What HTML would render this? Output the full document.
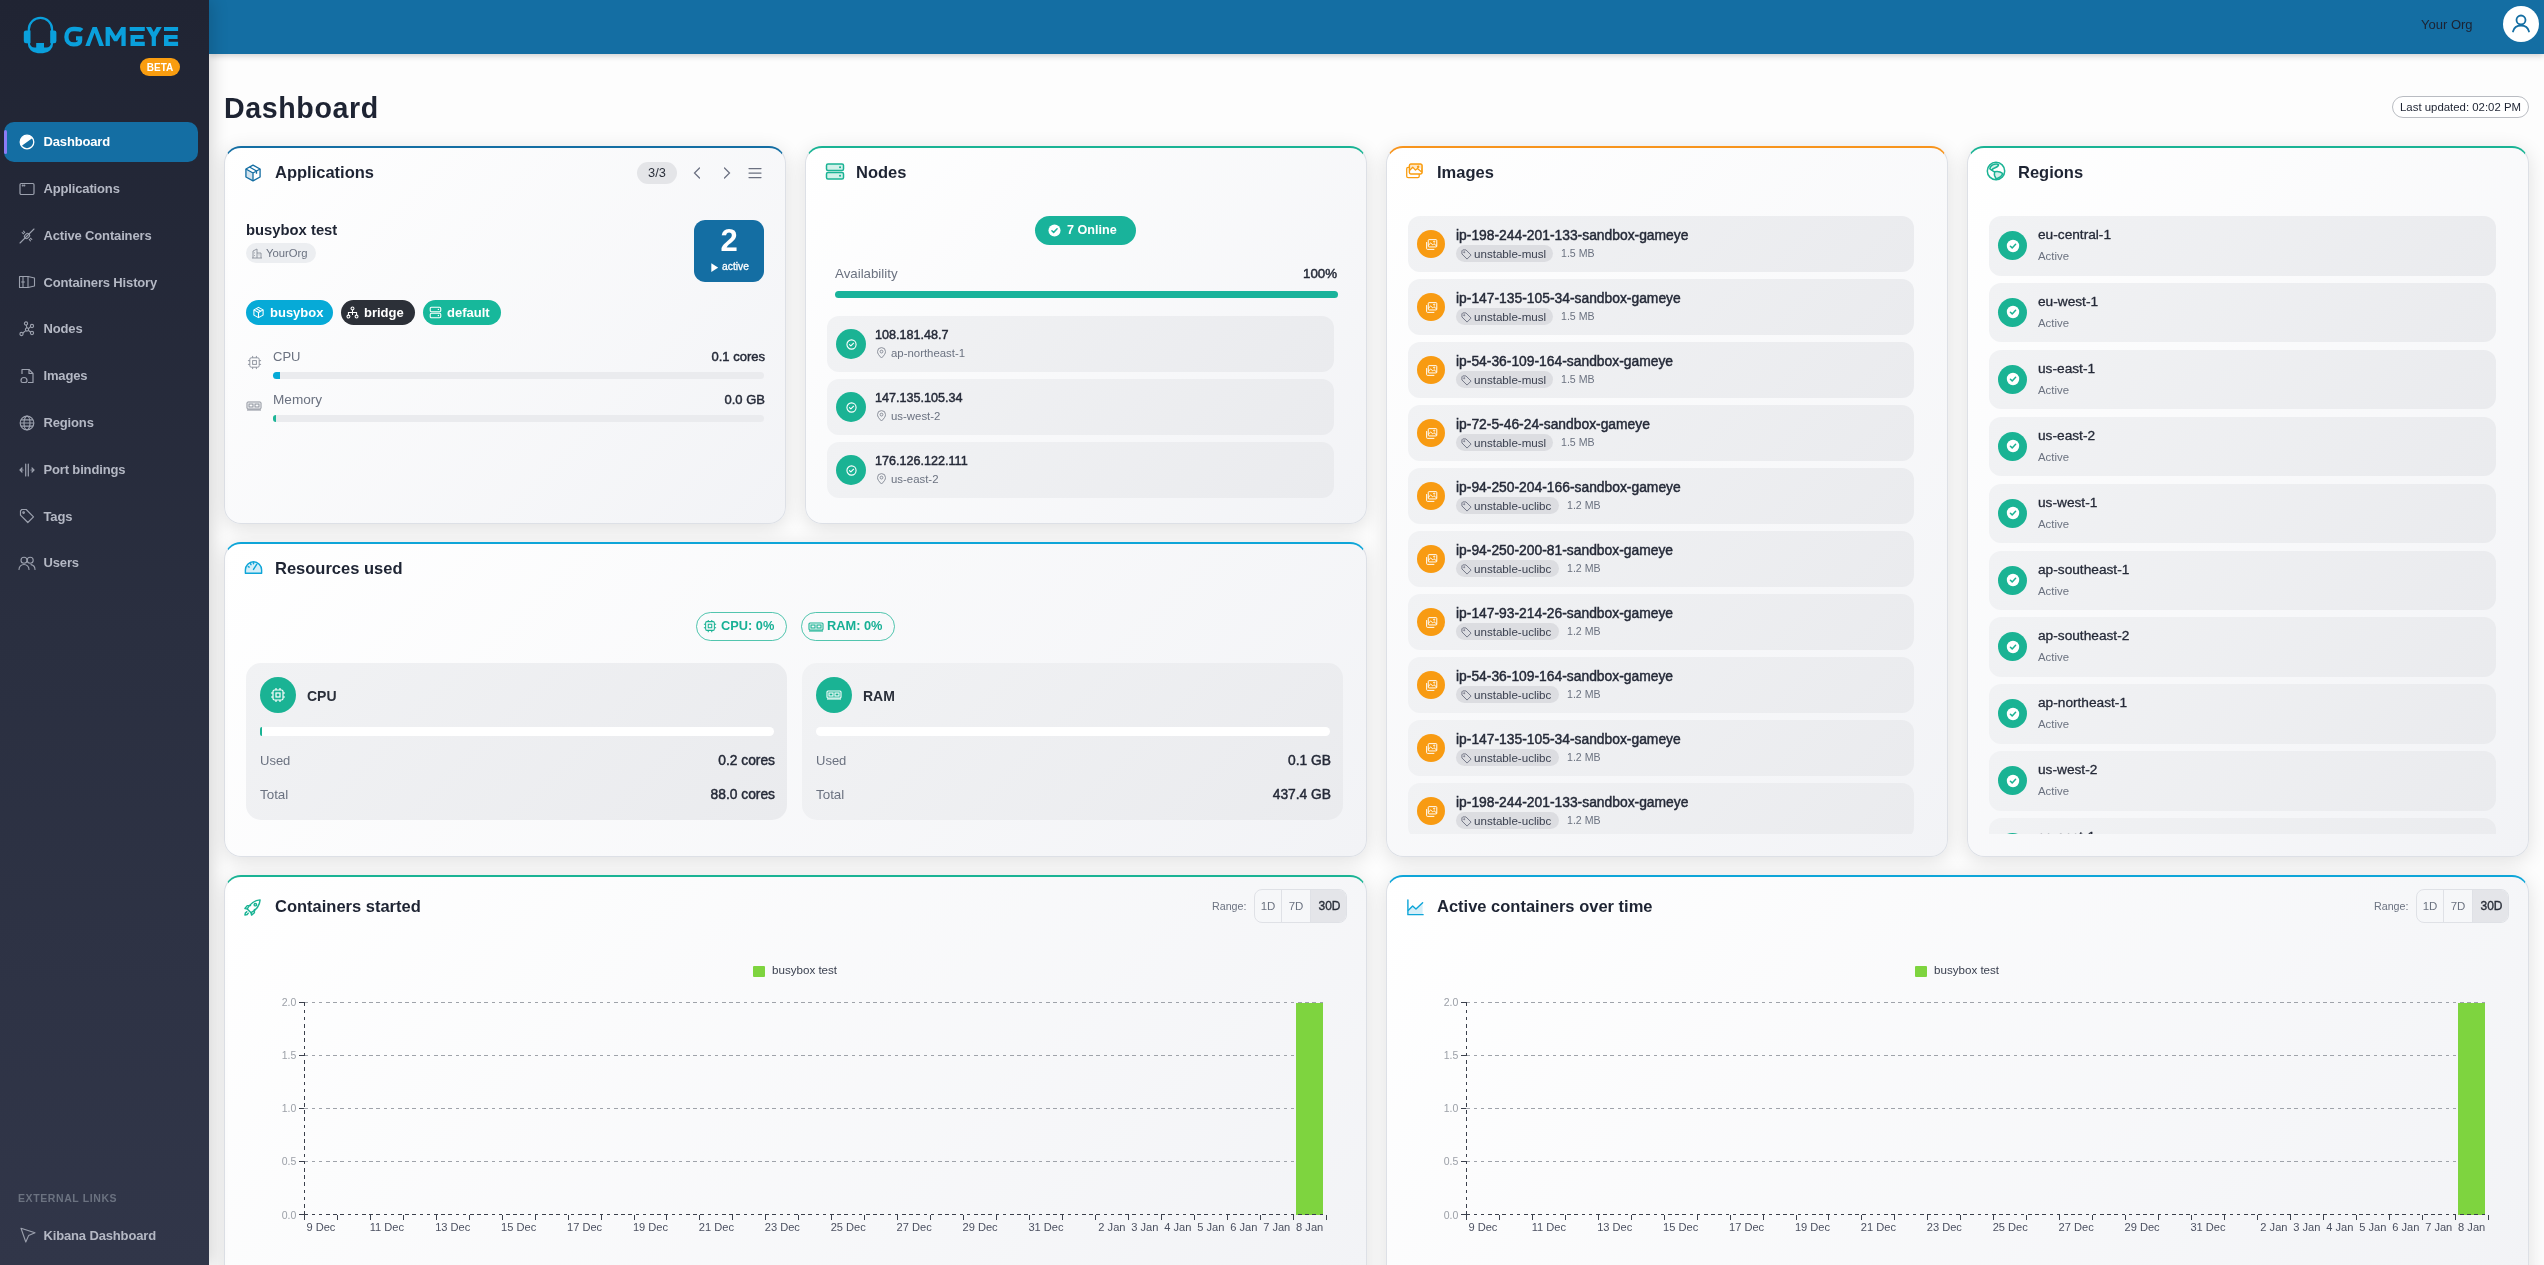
<!DOCTYPE html>
<html><head><meta charset="utf-8">
<style>
*{box-sizing:border-box;margin:0;padding:0}
html,body{width:2544px;height:1265px;overflow:hidden}
.sidebar,.header,.card,body>.abs{will-change:transform}
body{font-family:"Liberation Sans",sans-serif;color:#1e2433;background:#f4f4f4;position:relative}
.abs{position:absolute}
svg{display:block}
/* sidebar */
.sidebar{position:absolute;left:0;top:0;width:209px;height:1265px;background:linear-gradient(180deg,#202433 0%,#2a2f40 50%,#313649 100%);z-index:5;box-shadow:3px 0 16px rgba(0,0,0,0.16)}
.nav{position:absolute;left:4px;width:194px;height:40px;border-radius:10px;color:#b4b8c4;font-size:13px;font-weight:700;letter-spacing:-0.15px}
.nav .ic{position:absolute;left:15px;top:12px;width:16px;height:16px}
.nav span{position:absolute;left:39.5px;top:12.2px;line-height:16px;white-space:nowrap}
.nav.active{background:#146ea3;color:#fff}
.nav.active:before{content:"";position:absolute;left:0;top:8px;width:3px;height:24px;background:#8b7cf6;border-radius:2px}
/* header */
.header{position:absolute;left:209px;top:0;width:2335px;height:54px;background:#146ea3;z-index:4;box-shadow:0 2px 6px rgba(0,0,0,0.18)}
.main{position:absolute;left:209px;top:53px;width:2335px;height:1212px;background:#fdfdfd}
/* cards */
.card{position:absolute;border:1px solid #dde0e6;border-top:2px solid #146ea3;border-radius:17px;background:linear-gradient(135deg,#ffffff 0%,#f2f3f6 100%);box-shadow:0 4px 20px rgba(0,0,0,0.12);overflow:hidden}
.ctitle{position:absolute;font-size:16.5px;font-weight:700;color:#1e2433;line-height:20px;white-space:nowrap}
.cicon{position:absolute;width:20px;height:20px}
.row{position:absolute;border-radius:12px;background:linear-gradient(135deg,#f1f2f4 0%,#eaebee 100%)}
.circ{position:absolute;border-radius:50%}
.t14{font-size:13.5px;font-weight:400;color:#252a38;-webkit-text-stroke:0.45px #252a38;white-space:nowrap}
.t11{font-size:11px;color:#6b7280;white-space:nowrap}
</style></head>
<body>
<div class="sidebar">
  <!-- logo -->
  <svg class="abs" style="left:0;top:0" width="200" height="60" viewBox="0 0 200 60">
    <g fill="#0aa0dc">
      <path fill-rule="evenodd" d="M27.7,29.5 A12.75,12.75 0 0 1 53.2,29.5 V43 A10.2,10.2 0 0 1 43,53.2 H37.9 A10.2,10.2 0 0 1 27.7,43 Z M29.9,29.5 A10.55,10.55 0 0 1 51,29.5 V43 A4.5,4.5 0 0 1 46.5,47.5 H44 V42.9 H36.2 V47.5 H34.4 A4.5,4.5 0 0 1 29.9,43 Z"/>
      <path d="M26,30.5 H30.5 V43.3 H26 A2.2,2.2 0 0 1 23.8,41.1 V32.7 A2.2,2.2 0 0 1 26,30.5z"/>
      <path d="M50.2,30.5 H54.2 A2.2,2.2 0 0 1 56.4,32.7 V41.1 A2.2,2.2 0 0 1 54.2,43.3 H50.2z"/>
      <path d="M85.3,46.1 L92.6,27 H96.8 L104,46.1 H99.3 L94.6,32.8 L89.7,46.1z"/>
      <path d="M105.6,46.1 V27 H110 L115.65,36 L121.3,27 H125.7 V46.1 H121.4 V34.5 L117.2,41.3 H114.1 L109.9,34.5 V46.1z"/>
      <path d="M129.7,27 H144.8 V30.9 H129.7z M130.5,35.1 H143.6 V39 H135 V41.8 H144.8 V46.1 H130.5z"/>
      <path d="M145.9,27 H151 L153.8,32 L156.6,27 H161.8 L155.9,37 V46.1 H151.7 V37z"/>
      <path d="M164,27 H178.1 V30.9 H164z M164,35.1 H177.6 V39 H168.5 V41.8 H178.1 V46.1 H164z"/>
    </g>
    <path d="M81.8,30.4 C80.2,28.8 77.8,29 73.6,29 C68.8,29 66.4,32.6 66.4,36.9 C66.4,41.4 69.2,44.4 73.6,44.4 C78.2,44.4 80.1,42.6 80.1,40.2 V38.4 H76" fill="none" stroke="#0aa0dc" stroke-width="4.3"/>
  </svg>
  <div class="abs" style="left:140px;top:58px;width:40px;height:18.4px;border-radius:9.2px;background:#f99d10;color:#fff;font-size:10px;font-weight:700;text-align:center;line-height:18.4px;padding-top:1.2px">BETA</div>

  <div class="nav active" style="top:122px">
    <svg class="ic" viewBox="0 0 16 16" style="left:14.5px;top:12px;width:16px;height:16px"><path d="M2.43 11.9 A6.8 6.8 0 0 1 13.57 4.1 Z" fill="#fff"/><circle cx="8" cy="8" r="6.8" fill="none" stroke="#fff" stroke-width="1.3"/></svg>
    <span>Dashboard</span></div>
  <div class="nav" style="top:168.8px">
    <svg class="ic" viewBox="0 0 16 16" fill="none" stroke="#9ca1ae" stroke-width="1.2"><rect x="1" y="2.5" width="14" height="11" rx="1.2"/><circle cx="3.7" cy="4.6" r="0.4" fill="#9ca1ae"/><circle cx="5.4" cy="4.6" r="0.4" fill="#9ca1ae"/></svg>
    <span>Applications</span></div>
  <div class="nav" style="top:215.6px">
    <svg class="ic" viewBox="0 0 16 16" fill="none" stroke="#9ca1ae" stroke-width="1.1" stroke-linecap="round"><path d="M1 15 L15 1"/><rect x="5.3" y="6" width="5.4" height="4" rx="1.6" transform="rotate(-45 8 8)"/><path d="M3.2 4.6 l1.4 1.1 M11.4 10.3 l1.4 1.1 M4.6 3.2 l1.1 1.4 M10.3 11.4 l1.1 1.4"/></svg>
    <span>Active Containers</span></div>
  <div class="nav" style="top:262.4px">
    <svg class="ic" viewBox="0 0 18 16" fill="none" stroke="#9ca1ae" stroke-width="1.1" stroke-linejoin="round" style="width:18px;left:13.5px"><path d="M1.5 2.5 H10 L16.5 4 V12 L10 13.5 H1.5z"/><path d="M10 2.5 V13.5 M5 2.5 V13.5 M3.2 8 H6.8"/></svg>
    <span>Containers History</span></div>
  <div class="nav" style="top:309.2px">
    <svg class="ic" viewBox="0 0 16 16" fill="none" stroke="#9ca1ae" stroke-width="1.1"><circle cx="7" cy="2.5" r="1.6"/><circle cx="13" cy="5" r="1.6"/><circle cx="13" cy="12" r="1.6"/><circle cx="2.5" cy="13" r="1.6"/><circle cx="8" cy="8.5" r="1.6"/><path d="M7.4 4 L7.8 7 M9.4 7.8 L11.6 5.7 M9.3 9.3 L11.7 11.2 M6.8 9.6 L3.8 12"/></svg>
    <span>Nodes</span></div>
  <div class="nav" style="top:356px">
    <svg class="ic" viewBox="0 0 16 16" fill="none" stroke="#9ca1ae" stroke-width="1.2" stroke-linejoin="round"><path d="M3 6 V1.5 h7 l4 4 V14.5 h-5"/><path d="M10 1.5 v4 h4"/><path d="M2 12.5 c0-2 1.5-3 3-3 c1.5 0 3 1.2 3 3 c0 1.5-1 2-2 2 h-2.5 c-1 0-1.5-.7-1.5-2z"/></svg>
    <span>Images</span></div>
  <div class="nav" style="top:402.8px">
    <svg class="ic" viewBox="0 0 16 16" fill="none" stroke="#9ca1ae" stroke-width="1.2"><circle cx="8" cy="8" r="6.8"/><ellipse cx="8" cy="8" rx="3" ry="6.8"/><path d="M1.2 8 h13.6 M2 4.8 h12 M2 11.2 h12"/></svg>
    <span>Regions</span></div>
  <div class="nav" style="top:449.6px">
    <svg class="ic" viewBox="0 0 16 16" fill="none" stroke="#9ca1ae" stroke-width="1.2" stroke-linecap="round"><path d="M6.7 2 v12 M9.3 2 v12 M1 8 h3 M12 8 h3 M3 6 L1 8 L3 10 M13 6 L15 8 L13 10"/></svg>
    <span>Port bindings</span></div>
  <div class="nav" style="top:496.4px">
    <svg class="ic" viewBox="0 0 16 16" fill="none" stroke="#9ca1ae" stroke-width="1.2" stroke-linejoin="round"><path d="M1.5 2.8 V7.2 L8.8 14.5 L14.5 8.8 L7.2 1.5 H2.8z"/><circle cx="4.6" cy="4.6" r="0.8"/></svg>
    <span>Tags</span></div>
  <div class="nav" style="top:543.2px">
    <svg class="ic" viewBox="0 0 18 16" fill="none" stroke="#9ca1ae" stroke-width="1.1" stroke-linecap="round" style="width:18px;left:13.5px"><circle cx="6" cy="5.2" r="3"/><path d="M1 14.5 c0-3 2.2-5 5-5 s5 2 5 5"/><circle cx="12.2" cy="5.2" r="3"/><path d="M13 9.6 c2.4 .5 4 2.4 4 4.9"/></svg>
    <span>Users</span></div>

  <div class="abs" style="left:18px;top:1192px;font-size:10.5px;font-weight:700;color:#6b7280;letter-spacing:0.6px;line-height:12px">EXTERNAL LINKS</div>
  <div class="nav" style="top:1215.5px">
    <svg class="ic" viewBox="0 0 16 16" fill="none" stroke="#9ca1ae" stroke-width="1.1" stroke-linejoin="round" style="left:15.5px;top:11px;width:16px;height:16px"><path d="M1 1.2 L15 5.8 L8.6 8.6 L5.8 15z"/></svg>
    <span>Kibana Dashboard</span></div>
</div>

<div class="header">
  <div class="abs" style="left:2212px;top:17px;font-size:13px;color:#1e2433;line-height:16px;opacity:0.999;will-change:opacity">Your Org</div>
  <div class="abs" style="left:2294px;top:6px;width:36px;height:36px;border-radius:50%;background:#fff">
    <svg class="abs" style="left:8px;top:7px" width="20" height="20" viewBox="0 0 20 20" fill="none" stroke="#146ea3" stroke-width="1.8" stroke-linecap="round"><circle cx="10" cy="7" r="4.5"/><path d="M2 18.5 c1-4 4.5-6 8-6 s7 2 8 6"/></svg>
  </div>
</div>

<div class="main">
</div>

<!-- page title -->
<div class="abs" style="left:224px;top:91px;font-size:28.6px;font-weight:700;color:#1e2433;line-height:34px;letter-spacing:0.6px">Dashboard</div>
<div class="abs" style="left:2392px;top:96px;width:137px;height:22px;border:1px solid #b9bcc2;border-radius:11px;font-size:11.4px;color:#1e2433;text-align:center;line-height:20px;background:#fff">Last updated: 02:02 PM</div>


<!-- Applications card -->
<div class="card" style="left:224px;top:146px;width:562px;height:378px;border-top-color:#146ea3">
  <svg class="cicon" style="left:18px;top:15px" viewBox="0 0 24 24" fill="none" stroke="#146ea3" stroke-width="1.6" stroke-linejoin="round">
    <path d="M3.5 7.2 L12 12 V21.5 L3.5 16.8z" fill="#d3e3ee" stroke="none"/>
    <path d="M12 2.5 L20.5 7.2 V16.8 L12 21.5 L3.5 16.8 V7.2z"/><path d="M3.5 7.2 L12 12 L20.5 7.2 M12 12 V21.5 M7.8 4.8 L16.2 9.6 V13"/>
  </svg>
  <div class="ctitle" style="left:50px;top:14px">Applications</div>
  <div class="abs" style="left:412px;top:14px;width:40px;height:22px;border-radius:11px;background:#e4e5e8;font-size:12.8px;color:#2a2f3a;text-align:center;line-height:22px">3/3</div>
  <svg class="abs" style="left:465px;top:18px" width="14" height="14" viewBox="0 0 14 14" fill="none" stroke="#6b7080" stroke-width="1.25" stroke-linecap="round"><path d="M9.5 2 L4.5 7 L9.5 12"/></svg>
  <svg class="abs" style="left:495px;top:18px" width="14" height="14" viewBox="0 0 14 14" fill="none" stroke="#6b7080" stroke-width="1.25" stroke-linecap="round"><path d="M4.5 2 L9.5 7 L4.5 12"/></svg>
  <svg class="abs" style="left:522px;top:18px" width="16" height="14" viewBox="0 0 16 14" fill="none" stroke="#6b7080" stroke-width="1.25" stroke-linecap="round"><path d="M2 2.5 H14 M2 7 H14 M2 11.5 H14"/></svg>

  <div class="abs" style="left:21px;top:73px;font-size:14.8px;font-weight:700;color:#1e2433;line-height:18px;white-space:nowrap">busybox test</div>
  <div class="abs" style="left:21px;top:95px;width:70px;height:20px;border-radius:10px;background:#eceef1">
    <svg class="abs" style="left:5px;top:4px" width="12" height="12" viewBox="0 0 12 12" fill="none" stroke="#8a8f9a" stroke-width="0.9"><path d="M1 11 H11 M2 11 V4 L6 2 V11 M6 6 H10 V11 M3.5 5.5 v0.8 M3.5 8 v0.8 M8 7.5 v0.8"/></svg>
    <div class="abs" style="left:20px;top:3px;font-size:11.3px;color:#6b7280;line-height:14px">YourOrg</div>
  </div>
  <div class="abs" style="left:469px;top:72px;width:70px;height:62px;border-radius:11px;background:#146ea3;color:#fff">
    <div class="abs" style="left:0;width:70px;top:5.4px;font-size:31px;font-weight:700;line-height:31px;text-align:center">2</div>
    <svg class="abs" style="left:16.5px;top:42.7px" width="7.5" height="9.3" viewBox="0 0 7.5 9.3"><path d="M0.3 0.3 L7.3 4.65 L0.3 9z" fill="#fff"/></svg>
    <div class="abs" style="left:28px;top:41.5px;font-size:10.3px;line-height:10.3px;-webkit-text-stroke:0.3px #fff">active</div>
  </div>

  <div class="abs" style="left:21px;top:152px;width:87px;height:25px;border-radius:12.5px;background:#06aad7;color:#fff;font-size:13px;font-weight:700;line-height:25px">
    <svg class="abs" style="left:6px;top:6px" width="13" height="13" viewBox="0 0 24 24" fill="none" stroke="#fff" stroke-width="2" stroke-linejoin="round"><path d="M12 2.5 L20.5 7.2 V16.8 L12 21.5 L3.5 16.8 V7.2z"/><path d="M3.5 7.2 L12 12 L20.5 7.2 M12 12 V21.5 M7.8 4.8 L16.2 9.6"/></svg>
    <span class="abs" style="left:24px;top:0">busybox</span></div>
  <div class="abs" style="left:116px;top:152px;width:74px;height:25px;border-radius:12.5px;background:#2c3038;color:#fff;font-size:13px;font-weight:700;line-height:25px">
    <svg class="abs" style="left:5px;top:6px" width="13" height="13" viewBox="0 0 16 16" fill="none" stroke="#fff" stroke-width="1.3"><circle cx="8" cy="3" r="1.8"/><circle cx="3" cy="13" r="1.8"/><circle cx="13" cy="13" r="1.8"/><path d="M8 4.8 V8 M3 11.2 V8 H13 V11.2 M8 8 V11"/></svg>
    <span class="abs" style="left:23px;top:0">bridge</span></div>
  <div class="abs" style="left:198px;top:152px;width:78px;height:25px;border-radius:12.5px;background:#17b89b;color:#fff;font-size:13px;font-weight:700;line-height:25px">
    <svg class="abs" style="left:6px;top:6px" width="13" height="13" viewBox="0 0 16 16" fill="none" stroke="#fff" stroke-width="1.3"><rect x="1.5" y="1.5" width="13" height="5.5" rx="1.5"/><rect x="1.5" y="9" width="13" height="5.5" rx="1.5"/><path d="M11.5 4.2 h.1 M11.5 11.7 h.1" stroke-width="1.6" stroke-linecap="round"/></svg>
    <span class="abs" style="left:24px;top:0">default</span></div>

  <svg class="abs" style="left:22px;top:207px" width="15" height="15" viewBox="0 0 16 16" fill="none" stroke="#8a8f9a" stroke-width="1"><rect x="3" y="3" width="10" height="10" rx="1.5"/><rect x="6" y="6" width="4" height="4"/><path d="M6 1 v2 M10 1 v2 M6 13 v2 M10 13 v2 M1 6 h2 M1 10 h2 M13 6 h2 M13 10 h2"/></svg>
  <div class="abs" style="left:48px;top:201px;font-size:13px;color:#6b7280;line-height:16px">CPU</div>
  <div class="abs" style="right:20px;top:201px;font-size:13px;font-weight:400;-webkit-text-stroke:0.45px #252a38;color:#252a38;line-height:16px">0.1 cores</div>
  <div class="abs" style="left:48px;top:224px;width:491px;height:7px;border-radius:4px;background:#eaebee"><div style="width:7px;height:7px;border-radius:4px 0 0 4px;background:#06aad7"></div></div>

  <svg class="abs" style="left:21px;top:252px" width="16" height="12" viewBox="0 0 16 12" fill="none" stroke="#8a8f9a" stroke-width="1"><rect x="1" y="2" width="14" height="7" rx="1"/><rect x="3" y="4" width="4" height="3"/><rect x="9" y="4" width="4" height="3"/><path d="M2 9 v2 M4 9 v2 M6 9 v2 M8 9 v2 M10 9 v2 M12 9 v2 M14 9 v2"/></svg>
  <div class="abs" style="left:48px;top:244px;font-size:13.6px;color:#6b7280;line-height:16px">Memory</div>
  <div class="abs" style="right:20px;top:244px;font-size:13px;font-weight:400;-webkit-text-stroke:0.45px #252a38;color:#252a38;line-height:16px">0.0 GB</div>
  <div class="abs" style="left:48px;top:267px;width:491px;height:7px;border-radius:4px;background:#eaebee"><div style="width:3px;height:7px;border-radius:4px 0 0 4px;background:#1db597"></div></div>
</div>


<!-- Nodes card -->
<div class="card" style="left:805px;top:146px;width:562px;height:378px;border-top-color:#1ab394">
  <svg class="cicon" style="left:19px;top:14px" viewBox="0 0 20 20" fill="none" stroke="#1ab394" stroke-width="1.5"><rect x="1.5" y="2" width="17" height="6.5" rx="1.5" fill="#d2f1ea"/><rect x="1.5" y="10.5" width="17" height="6.5" rx="1.5" fill="#d2f1ea"/><path d="M15 5.2 h.1 M15 13.7 h.1" stroke-width="2" stroke-linecap="round"/></svg>
  <div class="ctitle" style="left:50px;top:14px">Nodes</div>
  <div class="abs" style="left:229px;top:68px;width:101px;height:29px;border-radius:14.5px;background:#19b39b;color:#fff;font-size:12.6px;font-weight:700;line-height:29px">
    <svg class="abs" style="left:13px;top:8px" width="13" height="13" viewBox="0 0 14 14"><circle cx="7" cy="7" r="6.5" fill="#fff"/><path d="M4.2 7.2 L6.1 9 L9.8 5.2" fill="none" stroke="#19b39b" stroke-width="1.6" stroke-linecap="round" stroke-linejoin="round"/></svg>
    <span class="abs" style="left:32px;top:0">7 Online</span></div>
  <div class="abs" style="left:29px;top:118px;font-size:13.3px;color:#6b7280;line-height:16px">Availability</div>
  <div class="abs" style="right:29px;top:118px;font-size:13.3px;font-weight:400;-webkit-text-stroke:0.45px #252a38;color:#252a38;line-height:16px">100%</div>
  <div class="abs" style="left:29px;top:143px;width:503px;height:7px;border-radius:4px;background:#19b39b"></div>
  <div class="row" style="left:21px;top:168px;width:507px;height:56px">
    <div class="circ" style="left:9px;top:13px;width:30px;height:30px;background:#1ab394"><svg class="abs" style="left:9.5px;top:9.5px" width="11" height="11" viewBox="0 0 12 12" fill="none" stroke="#fff" stroke-width="1.2"><circle cx="6" cy="6" r="5"/><path d="M3.8 6.1 L5.3 7.6 L8.3 4.6" stroke-linecap="round" stroke-linejoin="round"/></svg></div>
    <div class="abs t14" style="left:48px;top:11px;line-height:16px;font-size:12.6px">108.181.48.7</div>
    <div class="abs" style="left:49px;top:31px;width:12px;height:12px"><svg class="abs" style="left:0px;top:0px" width="11" height="12" viewBox="0 0 11 12" fill="none" stroke="#8a8f9a" stroke-width="1"><path d="M5.5 11 C2.5 8 1.5 6.3 1.5 4.6 a4 4 0 0 1 8 0 c0 1.7 -1 3.4 -4 6.4z"/><circle cx="5.5" cy="4.6" r="1.4"/></svg></div>
    <div class="abs t11" style="left:64px;top:31px;line-height:13px;font-size:11.4px">ap-northeast-1</div>
  </div>
  <div class="row" style="left:21px;top:231px;width:507px;height:56px">
    <div class="circ" style="left:9px;top:13px;width:30px;height:30px;background:#1ab394"><svg class="abs" style="left:9.5px;top:9.5px" width="11" height="11" viewBox="0 0 12 12" fill="none" stroke="#fff" stroke-width="1.2"><circle cx="6" cy="6" r="5"/><path d="M3.8 6.1 L5.3 7.6 L8.3 4.6" stroke-linecap="round" stroke-linejoin="round"/></svg></div>
    <div class="abs t14" style="left:48px;top:11px;line-height:16px;font-size:12.6px">147.135.105.34</div>
    <div class="abs" style="left:49px;top:31px;width:12px;height:12px"><svg class="abs" style="left:0px;top:0px" width="11" height="12" viewBox="0 0 11 12" fill="none" stroke="#8a8f9a" stroke-width="1"><path d="M5.5 11 C2.5 8 1.5 6.3 1.5 4.6 a4 4 0 0 1 8 0 c0 1.7 -1 3.4 -4 6.4z"/><circle cx="5.5" cy="4.6" r="1.4"/></svg></div>
    <div class="abs t11" style="left:64px;top:31px;line-height:13px;font-size:11.4px">us-west-2</div>
  </div>
  <div class="row" style="left:21px;top:294px;width:507px;height:56px">
    <div class="circ" style="left:9px;top:13px;width:30px;height:30px;background:#1ab394"><svg class="abs" style="left:9.5px;top:9.5px" width="11" height="11" viewBox="0 0 12 12" fill="none" stroke="#fff" stroke-width="1.2"><circle cx="6" cy="6" r="5"/><path d="M3.8 6.1 L5.3 7.6 L8.3 4.6" stroke-linecap="round" stroke-linejoin="round"/></svg></div>
    <div class="abs t14" style="left:48px;top:11px;line-height:16px;font-size:12.6px">176.126.122.111</div>
    <div class="abs" style="left:49px;top:31px;width:12px;height:12px"><svg class="abs" style="left:0px;top:0px" width="11" height="12" viewBox="0 0 11 12" fill="none" stroke="#8a8f9a" stroke-width="1"><path d="M5.5 11 C2.5 8 1.5 6.3 1.5 4.6 a4 4 0 0 1 8 0 c0 1.7 -1 3.4 -4 6.4z"/><circle cx="5.5" cy="4.6" r="1.4"/></svg></div>
    <div class="abs t11" style="left:64px;top:31px;line-height:13px;font-size:11.4px">us-east-2</div>
  </div>
</div>


<!-- Images card -->
<div class="card" style="left:1386px;top:146px;width:562px;height:711px;border-top-color:#f7941d">
  <svg class="cicon" style="left:18px;top:14.8px;width:18px;height:18px" viewBox="0 0 21 21" fill="none" stroke="#f99d10" stroke-width="1.5" stroke-linejoin="round"><rect x="2" y="5" width="14.6" height="12" rx="1.6"/><rect x="5.2" y="1.4" width="14.6" height="11.4" rx="1.6" fill="#fff"/><path d="M5.6 8.5 L9 4.8 L12.2 8.3 L14.6 6.4 L19.4 10.5 V12.8 H5.6z" fill="#fff" stroke="none"/><path d="M5.6 1.6 H19.6 V6.4 L14.6 6.4 L12.2 8.3 L9 4.8 L5.6 8.5z" fill="#fde7c8" stroke="none"/><rect x="5.2" y="1.4" width="14.6" height="11.4" rx="1.6"/><path d="M5.6 8.5 L9 4.8 L12.2 8.3 L14.6 6.4 L19.4 10.5"/><circle cx="15.3" cy="4.4" r="0.7" fill="#f99d10"/></svg>
  <div class="ctitle" style="left:50px;top:14px">Images</div>
  <div class="abs" style="left:21px;top:68px;width:507px;height:618px;overflow:hidden">
    <div class="row" style="left:0;top:0px;width:506px;height:56px">
      <div class="circ" style="left:9px;top:14px;width:28px;height:28px;background:#f89b12"><svg class="abs" style="left:7.5px;top:7.5px" width="13" height="13" viewBox="0 0 16 16" fill="none" stroke="#fff" stroke-width="1.2" stroke-linejoin="round"><rect x="4" y="2" width="10.5" height="9" rx="1"/><path d="M2 5 V13 a1 1 0 0 0 1 1 H11.5"/><path d="M4 9 L7 6.2 L9.5 8.5 L11 7 L14.5 10"/><circle cx="11.3" cy="4.5" r="0.7"/></svg></div>
      <div class="abs t14" style="left:48px;top:11px;line-height:16px;font-size:13.85px">ip-198-244-201-133-sandbox-gameye</div>
      <div class="abs" style="left:48px;top:29px;width:97px;height:17px;border-radius:8.5px;background:#dcdde1"><svg class="abs" style="left:5px;top:3.5px" width="11" height="11" viewBox="0 0 12 12" fill="none" stroke="#6b7080" stroke-width="1" stroke-linejoin="round"><path d="M1 2 V5.4 L6.6 11 L11 6.6 L5.4 1 H2z"/><circle cx="3.5" cy="3.5" r="0.6"/></svg><div class="abs" style="left:18px;top:2px;font-size:11.6px;color:#3b4150;line-height:13px;white-space:nowrap">unstable-musl</div></div>
      <div class="abs t11" style="left:153px;top:31px;line-height:13px;font-size:10.6px">1.5 MB</div>
    </div>
    <div class="row" style="left:0;top:63px;width:506px;height:56px">
      <div class="circ" style="left:9px;top:14px;width:28px;height:28px;background:#f89b12"><svg class="abs" style="left:7.5px;top:7.5px" width="13" height="13" viewBox="0 0 16 16" fill="none" stroke="#fff" stroke-width="1.2" stroke-linejoin="round"><rect x="4" y="2" width="10.5" height="9" rx="1"/><path d="M2 5 V13 a1 1 0 0 0 1 1 H11.5"/><path d="M4 9 L7 6.2 L9.5 8.5 L11 7 L14.5 10"/><circle cx="11.3" cy="4.5" r="0.7"/></svg></div>
      <div class="abs t14" style="left:48px;top:11px;line-height:16px;font-size:13.85px">ip-147-135-105-34-sandbox-gameye</div>
      <div class="abs" style="left:48px;top:29px;width:97px;height:17px;border-radius:8.5px;background:#dcdde1"><svg class="abs" style="left:5px;top:3.5px" width="11" height="11" viewBox="0 0 12 12" fill="none" stroke="#6b7080" stroke-width="1" stroke-linejoin="round"><path d="M1 2 V5.4 L6.6 11 L11 6.6 L5.4 1 H2z"/><circle cx="3.5" cy="3.5" r="0.6"/></svg><div class="abs" style="left:18px;top:2px;font-size:11.6px;color:#3b4150;line-height:13px;white-space:nowrap">unstable-musl</div></div>
      <div class="abs t11" style="left:153px;top:31px;line-height:13px;font-size:10.6px">1.5 MB</div>
    </div>
    <div class="row" style="left:0;top:126px;width:506px;height:56px">
      <div class="circ" style="left:9px;top:14px;width:28px;height:28px;background:#f89b12"><svg class="abs" style="left:7.5px;top:7.5px" width="13" height="13" viewBox="0 0 16 16" fill="none" stroke="#fff" stroke-width="1.2" stroke-linejoin="round"><rect x="4" y="2" width="10.5" height="9" rx="1"/><path d="M2 5 V13 a1 1 0 0 0 1 1 H11.5"/><path d="M4 9 L7 6.2 L9.5 8.5 L11 7 L14.5 10"/><circle cx="11.3" cy="4.5" r="0.7"/></svg></div>
      <div class="abs t14" style="left:48px;top:11px;line-height:16px;font-size:13.85px">ip-54-36-109-164-sandbox-gameye</div>
      <div class="abs" style="left:48px;top:29px;width:97px;height:17px;border-radius:8.5px;background:#dcdde1"><svg class="abs" style="left:5px;top:3.5px" width="11" height="11" viewBox="0 0 12 12" fill="none" stroke="#6b7080" stroke-width="1" stroke-linejoin="round"><path d="M1 2 V5.4 L6.6 11 L11 6.6 L5.4 1 H2z"/><circle cx="3.5" cy="3.5" r="0.6"/></svg><div class="abs" style="left:18px;top:2px;font-size:11.6px;color:#3b4150;line-height:13px;white-space:nowrap">unstable-musl</div></div>
      <div class="abs t11" style="left:153px;top:31px;line-height:13px;font-size:10.6px">1.5 MB</div>
    </div>
    <div class="row" style="left:0;top:189px;width:506px;height:56px">
      <div class="circ" style="left:9px;top:14px;width:28px;height:28px;background:#f89b12"><svg class="abs" style="left:7.5px;top:7.5px" width="13" height="13" viewBox="0 0 16 16" fill="none" stroke="#fff" stroke-width="1.2" stroke-linejoin="round"><rect x="4" y="2" width="10.5" height="9" rx="1"/><path d="M2 5 V13 a1 1 0 0 0 1 1 H11.5"/><path d="M4 9 L7 6.2 L9.5 8.5 L11 7 L14.5 10"/><circle cx="11.3" cy="4.5" r="0.7"/></svg></div>
      <div class="abs t14" style="left:48px;top:11px;line-height:16px;font-size:13.85px">ip-72-5-46-24-sandbox-gameye</div>
      <div class="abs" style="left:48px;top:29px;width:97px;height:17px;border-radius:8.5px;background:#dcdde1"><svg class="abs" style="left:5px;top:3.5px" width="11" height="11" viewBox="0 0 12 12" fill="none" stroke="#6b7080" stroke-width="1" stroke-linejoin="round"><path d="M1 2 V5.4 L6.6 11 L11 6.6 L5.4 1 H2z"/><circle cx="3.5" cy="3.5" r="0.6"/></svg><div class="abs" style="left:18px;top:2px;font-size:11.6px;color:#3b4150;line-height:13px;white-space:nowrap">unstable-musl</div></div>
      <div class="abs t11" style="left:153px;top:31px;line-height:13px;font-size:10.6px">1.5 MB</div>
    </div>
    <div class="row" style="left:0;top:252px;width:506px;height:56px">
      <div class="circ" style="left:9px;top:14px;width:28px;height:28px;background:#f89b12"><svg class="abs" style="left:7.5px;top:7.5px" width="13" height="13" viewBox="0 0 16 16" fill="none" stroke="#fff" stroke-width="1.2" stroke-linejoin="round"><rect x="4" y="2" width="10.5" height="9" rx="1"/><path d="M2 5 V13 a1 1 0 0 0 1 1 H11.5"/><path d="M4 9 L7 6.2 L9.5 8.5 L11 7 L14.5 10"/><circle cx="11.3" cy="4.5" r="0.7"/></svg></div>
      <div class="abs t14" style="left:48px;top:11px;line-height:16px;font-size:13.85px">ip-94-250-204-166-sandbox-gameye</div>
      <div class="abs" style="left:48px;top:29px;width:103px;height:17px;border-radius:8.5px;background:#dcdde1"><svg class="abs" style="left:5px;top:3.5px" width="11" height="11" viewBox="0 0 12 12" fill="none" stroke="#6b7080" stroke-width="1" stroke-linejoin="round"><path d="M1 2 V5.4 L6.6 11 L11 6.6 L5.4 1 H2z"/><circle cx="3.5" cy="3.5" r="0.6"/></svg><div class="abs" style="left:18px;top:2px;font-size:11.6px;color:#3b4150;line-height:13px;white-space:nowrap">unstable-uclibc</div></div>
      <div class="abs t11" style="left:159px;top:31px;line-height:13px;font-size:10.6px">1.2 MB</div>
    </div>
    <div class="row" style="left:0;top:315px;width:506px;height:56px">
      <div class="circ" style="left:9px;top:14px;width:28px;height:28px;background:#f89b12"><svg class="abs" style="left:7.5px;top:7.5px" width="13" height="13" viewBox="0 0 16 16" fill="none" stroke="#fff" stroke-width="1.2" stroke-linejoin="round"><rect x="4" y="2" width="10.5" height="9" rx="1"/><path d="M2 5 V13 a1 1 0 0 0 1 1 H11.5"/><path d="M4 9 L7 6.2 L9.5 8.5 L11 7 L14.5 10"/><circle cx="11.3" cy="4.5" r="0.7"/></svg></div>
      <div class="abs t14" style="left:48px;top:11px;line-height:16px;font-size:13.85px">ip-94-250-200-81-sandbox-gameye</div>
      <div class="abs" style="left:48px;top:29px;width:103px;height:17px;border-radius:8.5px;background:#dcdde1"><svg class="abs" style="left:5px;top:3.5px" width="11" height="11" viewBox="0 0 12 12" fill="none" stroke="#6b7080" stroke-width="1" stroke-linejoin="round"><path d="M1 2 V5.4 L6.6 11 L11 6.6 L5.4 1 H2z"/><circle cx="3.5" cy="3.5" r="0.6"/></svg><div class="abs" style="left:18px;top:2px;font-size:11.6px;color:#3b4150;line-height:13px;white-space:nowrap">unstable-uclibc</div></div>
      <div class="abs t11" style="left:159px;top:31px;line-height:13px;font-size:10.6px">1.2 MB</div>
    </div>
    <div class="row" style="left:0;top:378px;width:506px;height:56px">
      <div class="circ" style="left:9px;top:14px;width:28px;height:28px;background:#f89b12"><svg class="abs" style="left:7.5px;top:7.5px" width="13" height="13" viewBox="0 0 16 16" fill="none" stroke="#fff" stroke-width="1.2" stroke-linejoin="round"><rect x="4" y="2" width="10.5" height="9" rx="1"/><path d="M2 5 V13 a1 1 0 0 0 1 1 H11.5"/><path d="M4 9 L7 6.2 L9.5 8.5 L11 7 L14.5 10"/><circle cx="11.3" cy="4.5" r="0.7"/></svg></div>
      <div class="abs t14" style="left:48px;top:11px;line-height:16px;font-size:13.85px">ip-147-93-214-26-sandbox-gameye</div>
      <div class="abs" style="left:48px;top:29px;width:103px;height:17px;border-radius:8.5px;background:#dcdde1"><svg class="abs" style="left:5px;top:3.5px" width="11" height="11" viewBox="0 0 12 12" fill="none" stroke="#6b7080" stroke-width="1" stroke-linejoin="round"><path d="M1 2 V5.4 L6.6 11 L11 6.6 L5.4 1 H2z"/><circle cx="3.5" cy="3.5" r="0.6"/></svg><div class="abs" style="left:18px;top:2px;font-size:11.6px;color:#3b4150;line-height:13px;white-space:nowrap">unstable-uclibc</div></div>
      <div class="abs t11" style="left:159px;top:31px;line-height:13px;font-size:10.6px">1.2 MB</div>
    </div>
    <div class="row" style="left:0;top:441px;width:506px;height:56px">
      <div class="circ" style="left:9px;top:14px;width:28px;height:28px;background:#f89b12"><svg class="abs" style="left:7.5px;top:7.5px" width="13" height="13" viewBox="0 0 16 16" fill="none" stroke="#fff" stroke-width="1.2" stroke-linejoin="round"><rect x="4" y="2" width="10.5" height="9" rx="1"/><path d="M2 5 V13 a1 1 0 0 0 1 1 H11.5"/><path d="M4 9 L7 6.2 L9.5 8.5 L11 7 L14.5 10"/><circle cx="11.3" cy="4.5" r="0.7"/></svg></div>
      <div class="abs t14" style="left:48px;top:11px;line-height:16px;font-size:13.85px">ip-54-36-109-164-sandbox-gameye</div>
      <div class="abs" style="left:48px;top:29px;width:103px;height:17px;border-radius:8.5px;background:#dcdde1"><svg class="abs" style="left:5px;top:3.5px" width="11" height="11" viewBox="0 0 12 12" fill="none" stroke="#6b7080" stroke-width="1" stroke-linejoin="round"><path d="M1 2 V5.4 L6.6 11 L11 6.6 L5.4 1 H2z"/><circle cx="3.5" cy="3.5" r="0.6"/></svg><div class="abs" style="left:18px;top:2px;font-size:11.6px;color:#3b4150;line-height:13px;white-space:nowrap">unstable-uclibc</div></div>
      <div class="abs t11" style="left:159px;top:31px;line-height:13px;font-size:10.6px">1.2 MB</div>
    </div>
    <div class="row" style="left:0;top:504px;width:506px;height:56px">
      <div class="circ" style="left:9px;top:14px;width:28px;height:28px;background:#f89b12"><svg class="abs" style="left:7.5px;top:7.5px" width="13" height="13" viewBox="0 0 16 16" fill="none" stroke="#fff" stroke-width="1.2" stroke-linejoin="round"><rect x="4" y="2" width="10.5" height="9" rx="1"/><path d="M2 5 V13 a1 1 0 0 0 1 1 H11.5"/><path d="M4 9 L7 6.2 L9.5 8.5 L11 7 L14.5 10"/><circle cx="11.3" cy="4.5" r="0.7"/></svg></div>
      <div class="abs t14" style="left:48px;top:11px;line-height:16px;font-size:13.85px">ip-147-135-105-34-sandbox-gameye</div>
      <div class="abs" style="left:48px;top:29px;width:103px;height:17px;border-radius:8.5px;background:#dcdde1"><svg class="abs" style="left:5px;top:3.5px" width="11" height="11" viewBox="0 0 12 12" fill="none" stroke="#6b7080" stroke-width="1" stroke-linejoin="round"><path d="M1 2 V5.4 L6.6 11 L11 6.6 L5.4 1 H2z"/><circle cx="3.5" cy="3.5" r="0.6"/></svg><div class="abs" style="left:18px;top:2px;font-size:11.6px;color:#3b4150;line-height:13px;white-space:nowrap">unstable-uclibc</div></div>
      <div class="abs t11" style="left:159px;top:31px;line-height:13px;font-size:10.6px">1.2 MB</div>
    </div>
    <div class="row" style="left:0;top:567px;width:506px;height:56px">
      <div class="circ" style="left:9px;top:14px;width:28px;height:28px;background:#f89b12"><svg class="abs" style="left:7.5px;top:7.5px" width="13" height="13" viewBox="0 0 16 16" fill="none" stroke="#fff" stroke-width="1.2" stroke-linejoin="round"><rect x="4" y="2" width="10.5" height="9" rx="1"/><path d="M2 5 V13 a1 1 0 0 0 1 1 H11.5"/><path d="M4 9 L7 6.2 L9.5 8.5 L11 7 L14.5 10"/><circle cx="11.3" cy="4.5" r="0.7"/></svg></div>
      <div class="abs t14" style="left:48px;top:11px;line-height:16px;font-size:13.85px">ip-198-244-201-133-sandbox-gameye</div>
      <div class="abs" style="left:48px;top:29px;width:103px;height:17px;border-radius:8.5px;background:#dcdde1"><svg class="abs" style="left:5px;top:3.5px" width="11" height="11" viewBox="0 0 12 12" fill="none" stroke="#6b7080" stroke-width="1" stroke-linejoin="round"><path d="M1 2 V5.4 L6.6 11 L11 6.6 L5.4 1 H2z"/><circle cx="3.5" cy="3.5" r="0.6"/></svg><div class="abs" style="left:18px;top:2px;font-size:11.6px;color:#3b4150;line-height:13px;white-space:nowrap">unstable-uclibc</div></div>
      <div class="abs t11" style="left:159px;top:31px;line-height:13px;font-size:10.6px">1.2 MB</div>
    </div>
  </div>
</div>

<!-- Regions card -->
<div class="card" style="left:1967px;top:146px;width:562px;height:711px;border-top-color:#1ab394">
  <svg class="cicon" style="left:17.8px;top:12.8px" viewBox="0 0 20 20" fill="none" stroke="#1ab394" stroke-width="1.5" stroke-linejoin="round" stroke-linecap="round"><path d="M3.8 7.8 Q4.5 4.2 8.5 3.2 Q11.5 2.6 12.6 3.8 Q12 6 8.6 7 Q6.4 7.6 6 9.2 Q4.8 8.8 3.8 7.8z" fill="#d3f0ea"/><path d="M8.6 10.8 Q11.5 10 14 11 Q16 11.8 16.8 12.8 Q15.5 15.8 11.8 17.2 Q10.5 17.8 10.2 18.4 Q9.8 16.5 8.8 15.2 Q8 14 8.6 10.8z" fill="#d3f0ea"/><path d="M6 9.2 Q6.8 10.6 8.6 10.8"/><circle cx="10" cy="10" r="8.7"/></svg>
  <div class="ctitle" style="left:50px;top:14px">Regions</div>
  <div class="abs" style="left:21px;top:68px;width:507px;height:618px;overflow:hidden">
    <div class="row" style="left:0;top:0.0px;width:507px;height:59.5px">
      <div class="circ" style="left:9px;top:15px;width:29px;height:29px;background:#1ab394"><svg class="abs" style="left:7.5px;top:7.5px" width="14" height="14" viewBox="0 0 14 14"><circle cx="7" cy="7" r="6.2" fill="#fff"/><path d="M4.4 7.2 L6.2 8.9 L9.6 5.3" fill="none" stroke="#1ab394" stroke-width="1.5" stroke-linecap="round" stroke-linejoin="round"/></svg></div>
      <div class="abs t14" style="left:49px;top:11px;line-height:16px;font-size:13.7px;font-weight:400;color:#252a38;-webkit-text-stroke:0.3px #252a38">eu-central-1</div>
      <div class="abs t11" style="left:49px;top:34px;line-height:13px;font-size:11.4px">Active</div>
    </div>
    <div class="row" style="left:0;top:66.9px;width:507px;height:59.5px">
      <div class="circ" style="left:9px;top:15px;width:29px;height:29px;background:#1ab394"><svg class="abs" style="left:7.5px;top:7.5px" width="14" height="14" viewBox="0 0 14 14"><circle cx="7" cy="7" r="6.2" fill="#fff"/><path d="M4.4 7.2 L6.2 8.9 L9.6 5.3" fill="none" stroke="#1ab394" stroke-width="1.5" stroke-linecap="round" stroke-linejoin="round"/></svg></div>
      <div class="abs t14" style="left:49px;top:11px;line-height:16px;font-size:13.7px;font-weight:400;color:#252a38;-webkit-text-stroke:0.3px #252a38">eu-west-1</div>
      <div class="abs t11" style="left:49px;top:34px;line-height:13px;font-size:11.4px">Active</div>
    </div>
    <div class="row" style="left:0;top:133.8px;width:507px;height:59.5px">
      <div class="circ" style="left:9px;top:15px;width:29px;height:29px;background:#1ab394"><svg class="abs" style="left:7.5px;top:7.5px" width="14" height="14" viewBox="0 0 14 14"><circle cx="7" cy="7" r="6.2" fill="#fff"/><path d="M4.4 7.2 L6.2 8.9 L9.6 5.3" fill="none" stroke="#1ab394" stroke-width="1.5" stroke-linecap="round" stroke-linejoin="round"/></svg></div>
      <div class="abs t14" style="left:49px;top:11px;line-height:16px;font-size:13.7px;font-weight:400;color:#252a38;-webkit-text-stroke:0.3px #252a38">us-east-1</div>
      <div class="abs t11" style="left:49px;top:34px;line-height:13px;font-size:11.4px">Active</div>
    </div>
    <div class="row" style="left:0;top:200.7px;width:507px;height:59.5px">
      <div class="circ" style="left:9px;top:15px;width:29px;height:29px;background:#1ab394"><svg class="abs" style="left:7.5px;top:7.5px" width="14" height="14" viewBox="0 0 14 14"><circle cx="7" cy="7" r="6.2" fill="#fff"/><path d="M4.4 7.2 L6.2 8.9 L9.6 5.3" fill="none" stroke="#1ab394" stroke-width="1.5" stroke-linecap="round" stroke-linejoin="round"/></svg></div>
      <div class="abs t14" style="left:49px;top:11px;line-height:16px;font-size:13.7px;font-weight:400;color:#252a38;-webkit-text-stroke:0.3px #252a38">us-east-2</div>
      <div class="abs t11" style="left:49px;top:34px;line-height:13px;font-size:11.4px">Active</div>
    </div>
    <div class="row" style="left:0;top:267.6px;width:507px;height:59.5px">
      <div class="circ" style="left:9px;top:15px;width:29px;height:29px;background:#1ab394"><svg class="abs" style="left:7.5px;top:7.5px" width="14" height="14" viewBox="0 0 14 14"><circle cx="7" cy="7" r="6.2" fill="#fff"/><path d="M4.4 7.2 L6.2 8.9 L9.6 5.3" fill="none" stroke="#1ab394" stroke-width="1.5" stroke-linecap="round" stroke-linejoin="round"/></svg></div>
      <div class="abs t14" style="left:49px;top:11px;line-height:16px;font-size:13.7px;font-weight:400;color:#252a38;-webkit-text-stroke:0.3px #252a38">us-west-1</div>
      <div class="abs t11" style="left:49px;top:34px;line-height:13px;font-size:11.4px">Active</div>
    </div>
    <div class="row" style="left:0;top:334.5px;width:507px;height:59.5px">
      <div class="circ" style="left:9px;top:15px;width:29px;height:29px;background:#1ab394"><svg class="abs" style="left:7.5px;top:7.5px" width="14" height="14" viewBox="0 0 14 14"><circle cx="7" cy="7" r="6.2" fill="#fff"/><path d="M4.4 7.2 L6.2 8.9 L9.6 5.3" fill="none" stroke="#1ab394" stroke-width="1.5" stroke-linecap="round" stroke-linejoin="round"/></svg></div>
      <div class="abs t14" style="left:49px;top:11px;line-height:16px;font-size:13.7px;font-weight:400;color:#252a38;-webkit-text-stroke:0.3px #252a38">ap-southeast-1</div>
      <div class="abs t11" style="left:49px;top:34px;line-height:13px;font-size:11.4px">Active</div>
    </div>
    <div class="row" style="left:0;top:401.4px;width:507px;height:59.5px">
      <div class="circ" style="left:9px;top:15px;width:29px;height:29px;background:#1ab394"><svg class="abs" style="left:7.5px;top:7.5px" width="14" height="14" viewBox="0 0 14 14"><circle cx="7" cy="7" r="6.2" fill="#fff"/><path d="M4.4 7.2 L6.2 8.9 L9.6 5.3" fill="none" stroke="#1ab394" stroke-width="1.5" stroke-linecap="round" stroke-linejoin="round"/></svg></div>
      <div class="abs t14" style="left:49px;top:11px;line-height:16px;font-size:13.7px;font-weight:400;color:#252a38;-webkit-text-stroke:0.3px #252a38">ap-southeast-2</div>
      <div class="abs t11" style="left:49px;top:34px;line-height:13px;font-size:11.4px">Active</div>
    </div>
    <div class="row" style="left:0;top:468.3px;width:507px;height:59.5px">
      <div class="circ" style="left:9px;top:15px;width:29px;height:29px;background:#1ab394"><svg class="abs" style="left:7.5px;top:7.5px" width="14" height="14" viewBox="0 0 14 14"><circle cx="7" cy="7" r="6.2" fill="#fff"/><path d="M4.4 7.2 L6.2 8.9 L9.6 5.3" fill="none" stroke="#1ab394" stroke-width="1.5" stroke-linecap="round" stroke-linejoin="round"/></svg></div>
      <div class="abs t14" style="left:49px;top:11px;line-height:16px;font-size:13.7px;font-weight:400;color:#252a38;-webkit-text-stroke:0.3px #252a38">ap-northeast-1</div>
      <div class="abs t11" style="left:49px;top:34px;line-height:13px;font-size:11.4px">Active</div>
    </div>
    <div class="row" style="left:0;top:535.2px;width:507px;height:59.5px">
      <div class="circ" style="left:9px;top:15px;width:29px;height:29px;background:#1ab394"><svg class="abs" style="left:7.5px;top:7.5px" width="14" height="14" viewBox="0 0 14 14"><circle cx="7" cy="7" r="6.2" fill="#fff"/><path d="M4.4 7.2 L6.2 8.9 L9.6 5.3" fill="none" stroke="#1ab394" stroke-width="1.5" stroke-linecap="round" stroke-linejoin="round"/></svg></div>
      <div class="abs t14" style="left:49px;top:11px;line-height:16px;font-size:13.7px;font-weight:400;color:#252a38;-webkit-text-stroke:0.3px #252a38">us-west-2</div>
      <div class="abs t11" style="left:49px;top:34px;line-height:13px;font-size:11.4px">Active</div>
    </div>
    <div class="row" style="left:0;top:602.1px;width:507px;height:59.5px">
      <div class="circ" style="left:9px;top:15px;width:29px;height:29px;background:#1ab394"><svg class="abs" style="left:7.5px;top:7.5px" width="14" height="14" viewBox="0 0 14 14"><circle cx="7" cy="7" r="6.2" fill="#fff"/><path d="M4.4 7.2 L6.2 8.9 L9.6 5.3" fill="none" stroke="#1ab394" stroke-width="1.5" stroke-linecap="round" stroke-linejoin="round"/></svg></div>
      <div class="abs t14" style="left:49px;top:11px;line-height:16px;font-size:13.7px;font-weight:400;color:#252a38;-webkit-text-stroke:0.3px #252a38">sa-east-1</div>
      <div class="abs t11" style="left:49px;top:34px;line-height:13px;font-size:11.4px">Active</div>
    </div>
  </div>
</div>


<!-- Resources card -->
<div class="card" style="left:224px;top:542px;width:1143px;height:315px;border-top-color:#0ea5d8">
  <svg class="cicon" style="left:18px;top:13px;width:21px;height:21px" viewBox="0 0 22 22" fill="none" stroke="#0ea5d8" stroke-width="1.5" stroke-linejoin="round" stroke-linecap="round"><path d="M2.5 17 V13.5 a8.5 8.5 0 0 1 17 0 V17z" fill="#d5eef8"/><path d="M11 13 L14.5 7.5"/><path d="M5.5 10 l1 .6 M11 6 v1.2 M7.8 7 l.6 1"/></svg>
  <div class="ctitle" style="left:50px;top:14px">Resources used</div>
  <div class="abs" style="left:471px;top:68px;width:91px;height:29px;border:1px solid rgba(26,179,148,0.75);border-radius:14.5px;color:#17b095;font-size:12.8px;font-weight:700;line-height:26px">
    <div class="abs" style="left:6px;top:6px;width:14px;height:14px"><svg width="100%" height="100%" viewBox="0 0 16 16" fill="none" stroke="#1ab394" stroke-width="1.2"><rect x="3" y="3" width="10" height="10" rx="1.5"/><rect x="6" y="6" width="4" height="4"/><path d="M6 1 v2 M10 1 v2 M6 13 v2 M10 13 v2 M1 6 h2 M1 10 h2 M13 6 h2 M13 10 h2"/></svg></div><span class="abs" style="left:24px;top:0">CPU: 0%</span></div>
  <div class="abs" style="left:576px;top:68px;width:94px;height:29px;border:1px solid rgba(26,179,148,0.75);border-radius:14.5px;color:#17b095;font-size:12.8px;font-weight:700;line-height:26px">
    <div class="abs" style="left:6px;top:8px;width:16px;height:12px"><svg width="100%" height="100%" viewBox="0 0 16 12" fill="none" stroke="#1ab394" stroke-width="1.1"><rect x="1" y="2" width="14" height="7" rx="1"/><rect x="3" y="4" width="4" height="3"/><rect x="9" y="4" width="4" height="3"/><path d="M2 9 v2 M4 9 v2 M6 9 v2 M8 9 v2 M10 9 v2 M12 9 v2 M14 9 v2"/></svg></div><span class="abs" style="left:25px;top:0">RAM: 0%</span></div>
  <div class="row" style="left:21px;top:119px;width:541px;height:157px;border-radius:15px">
    <div class="circ" style="left:13.5px;top:13.5px;width:36px;height:36px;background:#1ab394"><div class="abs" style="left:10px;top:10px;width:16px;height:16px"><svg width="100%" height="100%" viewBox="0 0 16 16" fill="none" stroke="#fff" stroke-width="1.2"><rect x="3" y="3" width="10" height="10" rx="1.5"/><rect x="6" y="6" width="4" height="4"/><path d="M6 1 v2 M10 1 v2 M6 13 v2 M10 13 v2 M1 6 h2 M1 10 h2 M13 6 h2 M13 10 h2"/></svg></div></div>
    <div class="abs" style="left:61px;top:23.5px;font-size:14px;font-weight:700;color:#2a2f3a;line-height:18px">CPU</div>
    <div class="abs" style="left:13.5px;top:64px;width:514px;height:9px;border-radius:5px;background:#fff"><div style="width:2px;height:9px;border-radius:5px 0 0 5px;background:#1ab394"></div></div>
    <div class="abs" style="left:14px;top:90px;font-size:13px;color:#6b7280;line-height:16px">Used</div>
    <div class="abs" style="right:12px;top:90px;font-size:13.8px;font-weight:400;-webkit-text-stroke:0.45px #252a38;color:#252a38;line-height:16px">0.2 cores</div>
    <div class="abs" style="left:14px;top:124px;font-size:13.4px;color:#6b7280;line-height:16px">Total</div>
    <div class="abs" style="right:12px;top:124px;font-size:13.8px;font-weight:400;-webkit-text-stroke:0.45px #252a38;color:#252a38;line-height:16px">88.0 cores</div>
  </div>
  <div class="row" style="left:577px;top:119px;width:541px;height:157px;border-radius:15px">
    <div class="circ" style="left:13.5px;top:13.5px;width:36px;height:36px;background:#1ab394"><div class="abs" style="left:10px;top:10px;width:16px;height:16px"><div style="margin-top:2px;height:12px"><svg width="100%" height="100%" viewBox="0 0 16 12" fill="none" stroke="#fff" stroke-width="1.1"><rect x="1" y="2" width="14" height="7" rx="1"/><rect x="3" y="4" width="4" height="3"/><rect x="9" y="4" width="4" height="3"/><path d="M2 9 v2 M4 9 v2 M6 9 v2 M8 9 v2 M10 9 v2 M12 9 v2 M14 9 v2"/></svg></div></div></div>
    <div class="abs" style="left:61px;top:23.5px;font-size:14px;font-weight:700;color:#2a2f3a;line-height:18px">RAM</div>
    <div class="abs" style="left:13.5px;top:64px;width:514px;height:9px;border-radius:5px;background:#fff"><div style="width:0px;height:9px;border-radius:5px 0 0 5px;background:#1ab394"></div></div>
    <div class="abs" style="left:14px;top:90px;font-size:13px;color:#6b7280;line-height:16px">Used</div>
    <div class="abs" style="right:12px;top:90px;font-size:13.8px;font-weight:400;-webkit-text-stroke:0.45px #252a38;color:#252a38;line-height:16px">0.1 GB</div>
    <div class="abs" style="left:14px;top:124px;font-size:13.4px;color:#6b7280;line-height:16px">Total</div>
    <div class="abs" style="right:12px;top:124px;font-size:13.8px;font-weight:400;-webkit-text-stroke:0.45px #252a38;color:#252a38;line-height:16px">437.4 GB</div>
  </div>
</div>


<div class="card" style="left:224px;top:875px;width:1143px;height:420px;border-top-color:#1ab394">
  <svg class="cicon" style="left:18px;top:21px;width:19px;height:19px" viewBox="0 0 20 20" fill="none" stroke="#1ab394" stroke-width="1.5" stroke-linejoin="round" stroke-linecap="round"><path d="M4.5 11.5 L8.5 15.5 C13 13 17.5 9 18 2 C11 2.5 7 7 4.5 11.5z"/><path d="M4.5 11.5 L2 11 L4.5 8 H8"/><path d="M8.5 15.5 L9 18 L12 15.5 V12"/><path d="M4 14.5 C2.5 15 2 17 2 18 C3 18 5 17.5 5.5 16"/><circle cx="13" cy="7" r="1.3"/></svg>
  <div class="ctitle" style="left:50px;top:19px">Containers started</div>
  <div class="abs" style="left:987px;top:22px;font-size:10.7px;color:#6b7280;line-height:14px">Range:</div>
  <div class="abs" style="left:1029px;top:12px;width:93px;height:34px;border:1px solid #dfe1e6;border-radius:8px;overflow:hidden;font-size:11.5px;color:#6b7280;line-height:32px;background:#f6f7f9">
    <div class="abs" style="left:0;top:0;width:27px;height:32px;text-align:center;border-right:1px solid #dfe1e6">1D</div>
    <div class="abs" style="left:27px;top:0;width:29px;height:32px;text-align:center;border-right:1px solid #dfe1e6">7D</div>
    <div class="abs" style="left:56px;top:0;width:37px;height:32px;text-align:center;background:#e4e5e9;color:#2a2f3a;font-size:12px;-webkit-text-stroke:0.35px #2a2f3a">30D</div>
  </div>
  <div class="abs" style="left:527.5px;top:88.5px;width:12px;height:11px;background:#7ed43f;border-radius:1px"></div>
  <div class="abs" style="left:547px;top:86px;font-size:11.6px;color:#3b4150;line-height:14px">busybox test</div>
  <svg class="abs" style="left:0;top:0" width="1140" height="420" font-family="Liberation Sans" shape-rendering="crispEdges"><line x1="79.4" y1="125.3" x2="1101.16" y2="125.3" stroke="#9fa3aa" stroke-dasharray="3.6 3.6"/><line x1="79.4" y1="178.4" x2="1101.16" y2="178.4" stroke="#9fa3aa" stroke-dasharray="3.6 3.6"/><line x1="79.4" y1="231.5" x2="1101.16" y2="231.5" stroke="#9fa3aa" stroke-dasharray="3.6 3.6"/><line x1="79.4" y1="284.6" x2="1101.16" y2="284.6" stroke="#9fa3aa" stroke-dasharray="3.6 3.6"/><rect x="1071.30" y="126.2" width="26.6" height="211.5" fill="#7ed43f"/><line x1="79.4" y1="125.3" x2="79.4" y2="337.7" stroke="#3b404c" stroke-dasharray="3.6 3.6"/><line x1="79.4" y1="337.7" x2="1101.16" y2="337.7" stroke="#3b404c" stroke-dasharray="3.6 3.6"/><line x1="73.9" y1="125.3" x2="79.4" y2="125.3" stroke="#3b404c"/><text x="71.4" y="129.1" text-anchor="end" font-size="10.5" fill="#9ca0a8">2.0</text><line x1="73.9" y1="178.4" x2="79.4" y2="178.4" stroke="#3b404c"/><text x="71.4" y="182.20000000000002" text-anchor="end" font-size="10.5" fill="#9ca0a8">1.5</text><line x1="73.9" y1="231.5" x2="79.4" y2="231.5" stroke="#3b404c"/><text x="71.4" y="235.3" text-anchor="end" font-size="10.5" fill="#9ca0a8">1.0</text><line x1="73.9" y1="284.6" x2="79.4" y2="284.6" stroke="#3b404c"/><text x="71.4" y="288.40000000000003" text-anchor="end" font-size="10.5" fill="#9ca0a8">0.5</text><line x1="73.9" y1="337.7" x2="79.4" y2="337.7" stroke="#3b404c"/><text x="71.4" y="341.5" text-anchor="end" font-size="10.5" fill="#9ca0a8">0.0</text><line x1="79.40" y1="337.7" x2="79.40" y2="342.7" stroke="#3b404c"/><line x1="112.36" y1="337.7" x2="112.36" y2="342.7" stroke="#3b404c"/><line x1="145.32" y1="337.7" x2="145.32" y2="342.7" stroke="#3b404c"/><line x1="178.28" y1="337.7" x2="178.28" y2="342.7" stroke="#3b404c"/><line x1="211.24" y1="337.7" x2="211.24" y2="342.7" stroke="#3b404c"/><line x1="244.20" y1="337.7" x2="244.20" y2="342.7" stroke="#3b404c"/><line x1="277.16" y1="337.7" x2="277.16" y2="342.7" stroke="#3b404c"/><line x1="310.12" y1="337.7" x2="310.12" y2="342.7" stroke="#3b404c"/><line x1="343.08" y1="337.7" x2="343.08" y2="342.7" stroke="#3b404c"/><line x1="376.04" y1="337.7" x2="376.04" y2="342.7" stroke="#3b404c"/><line x1="409.00" y1="337.7" x2="409.00" y2="342.7" stroke="#3b404c"/><line x1="441.96" y1="337.7" x2="441.96" y2="342.7" stroke="#3b404c"/><line x1="474.92" y1="337.7" x2="474.92" y2="342.7" stroke="#3b404c"/><line x1="507.88" y1="337.7" x2="507.88" y2="342.7" stroke="#3b404c"/><line x1="540.84" y1="337.7" x2="540.84" y2="342.7" stroke="#3b404c"/><line x1="573.80" y1="337.7" x2="573.80" y2="342.7" stroke="#3b404c"/><line x1="606.76" y1="337.7" x2="606.76" y2="342.7" stroke="#3b404c"/><line x1="639.72" y1="337.7" x2="639.72" y2="342.7" stroke="#3b404c"/><line x1="672.68" y1="337.7" x2="672.68" y2="342.7" stroke="#3b404c"/><line x1="705.64" y1="337.7" x2="705.64" y2="342.7" stroke="#3b404c"/><line x1="738.60" y1="337.7" x2="738.60" y2="342.7" stroke="#3b404c"/><line x1="771.56" y1="337.7" x2="771.56" y2="342.7" stroke="#3b404c"/><line x1="804.52" y1="337.7" x2="804.52" y2="342.7" stroke="#3b404c"/><line x1="837.48" y1="337.7" x2="837.48" y2="342.7" stroke="#3b404c"/><line x1="870.44" y1="337.7" x2="870.44" y2="342.7" stroke="#3b404c"/><line x1="903.40" y1="337.7" x2="903.40" y2="342.7" stroke="#3b404c"/><line x1="936.36" y1="337.7" x2="936.36" y2="342.7" stroke="#3b404c"/><line x1="969.32" y1="337.7" x2="969.32" y2="342.7" stroke="#3b404c"/><line x1="1002.28" y1="337.7" x2="1002.28" y2="342.7" stroke="#3b404c"/><line x1="1035.24" y1="337.7" x2="1035.24" y2="342.7" stroke="#3b404c"/><line x1="1068.20" y1="337.7" x2="1068.20" y2="342.7" stroke="#3b404c"/><line x1="1101.16" y1="337.7" x2="1101.16" y2="342.7" stroke="#3b404c"/><text x="95.88" y="354.2" text-anchor="middle" font-size="11.1" fill="#4b5060">9 Dec</text><text x="161.80" y="354.2" text-anchor="middle" font-size="11.1" fill="#4b5060">11 Dec</text><text x="227.72" y="354.2" text-anchor="middle" font-size="11.1" fill="#4b5060">13 Dec</text><text x="293.64" y="354.2" text-anchor="middle" font-size="11.1" fill="#4b5060">15 Dec</text><text x="359.56" y="354.2" text-anchor="middle" font-size="11.1" fill="#4b5060">17 Dec</text><text x="425.48" y="354.2" text-anchor="middle" font-size="11.1" fill="#4b5060">19 Dec</text><text x="491.40" y="354.2" text-anchor="middle" font-size="11.1" fill="#4b5060">21 Dec</text><text x="557.32" y="354.2" text-anchor="middle" font-size="11.1" fill="#4b5060">23 Dec</text><text x="623.24" y="354.2" text-anchor="middle" font-size="11.1" fill="#4b5060">25 Dec</text><text x="689.16" y="354.2" text-anchor="middle" font-size="11.1" fill="#4b5060">27 Dec</text><text x="755.08" y="354.2" text-anchor="middle" font-size="11.1" fill="#4b5060">29 Dec</text><text x="821.00" y="354.2" text-anchor="middle" font-size="11.1" fill="#4b5060">31 Dec</text><text x="886.92" y="354.2" text-anchor="middle" font-size="11.1" fill="#4b5060">2 Jan</text><text x="919.88" y="354.2" text-anchor="middle" font-size="11.1" fill="#4b5060">3 Jan</text><text x="952.84" y="354.2" text-anchor="middle" font-size="11.1" fill="#4b5060">4 Jan</text><text x="985.80" y="354.2" text-anchor="middle" font-size="11.1" fill="#4b5060">5 Jan</text><text x="1018.76" y="354.2" text-anchor="middle" font-size="11.1" fill="#4b5060">6 Jan</text><text x="1051.72" y="354.2" text-anchor="middle" font-size="11.1" fill="#4b5060">7 Jan</text><text x="1084.68" y="354.2" text-anchor="middle" font-size="11.1" fill="#4b5060">8 Jan</text></svg>
</div>

<div class="card" style="left:1386px;top:875px;width:1143px;height:420px;border-top-color:#0ea5d8">
  <svg class="cicon" style="left:19px;top:21px;width:19px;height:19px" viewBox="0 0 20 20" fill="none" stroke="#0ea5d8" stroke-width="1.5" stroke-linejoin="round" stroke-linecap="round"><path d="M2.5 13 L7 8.5 L10.5 11.5 L17.5 5 V17.5 H2.5z" fill="#d5eef8" stroke="none"/><path d="M2 2 V17.5 H18"/><path d="M2.5 13 L7 8.5 L10.5 11.5 L17.5 5"/></svg>
  <div class="ctitle" style="left:50px;top:19px">Active containers over time</div>
  <div class="abs" style="left:987px;top:22px;font-size:10.7px;color:#6b7280;line-height:14px">Range:</div>
  <div class="abs" style="left:1029px;top:12px;width:93px;height:34px;border:1px solid #dfe1e6;border-radius:8px;overflow:hidden;font-size:11.5px;color:#6b7280;line-height:32px;background:#f6f7f9">
    <div class="abs" style="left:0;top:0;width:27px;height:32px;text-align:center;border-right:1px solid #dfe1e6">1D</div>
    <div class="abs" style="left:27px;top:0;width:29px;height:32px;text-align:center;border-right:1px solid #dfe1e6">7D</div>
    <div class="abs" style="left:56px;top:0;width:37px;height:32px;text-align:center;background:#e4e5e9;color:#2a2f3a;font-size:12px;-webkit-text-stroke:0.35px #2a2f3a">30D</div>
  </div>
  <div class="abs" style="left:527.5px;top:88.5px;width:12px;height:11px;background:#7ed43f;border-radius:1px"></div>
  <div class="abs" style="left:547px;top:86px;font-size:11.6px;color:#3b4150;line-height:14px">busybox test</div>
  <svg class="abs" style="left:0;top:0" width="1140" height="420" font-family="Liberation Sans" shape-rendering="crispEdges"><line x1="79.4" y1="125.3" x2="1101.16" y2="125.3" stroke="#9fa3aa" stroke-dasharray="3.6 3.6"/><line x1="79.4" y1="178.4" x2="1101.16" y2="178.4" stroke="#9fa3aa" stroke-dasharray="3.6 3.6"/><line x1="79.4" y1="231.5" x2="1101.16" y2="231.5" stroke="#9fa3aa" stroke-dasharray="3.6 3.6"/><line x1="79.4" y1="284.6" x2="1101.16" y2="284.6" stroke="#9fa3aa" stroke-dasharray="3.6 3.6"/><rect x="1071.30" y="126.2" width="26.6" height="211.5" fill="#7ed43f"/><line x1="79.4" y1="125.3" x2="79.4" y2="337.7" stroke="#3b404c" stroke-dasharray="3.6 3.6"/><line x1="79.4" y1="337.7" x2="1101.16" y2="337.7" stroke="#3b404c" stroke-dasharray="3.6 3.6"/><line x1="73.9" y1="125.3" x2="79.4" y2="125.3" stroke="#3b404c"/><text x="71.4" y="129.1" text-anchor="end" font-size="10.5" fill="#9ca0a8">2.0</text><line x1="73.9" y1="178.4" x2="79.4" y2="178.4" stroke="#3b404c"/><text x="71.4" y="182.20000000000002" text-anchor="end" font-size="10.5" fill="#9ca0a8">1.5</text><line x1="73.9" y1="231.5" x2="79.4" y2="231.5" stroke="#3b404c"/><text x="71.4" y="235.3" text-anchor="end" font-size="10.5" fill="#9ca0a8">1.0</text><line x1="73.9" y1="284.6" x2="79.4" y2="284.6" stroke="#3b404c"/><text x="71.4" y="288.40000000000003" text-anchor="end" font-size="10.5" fill="#9ca0a8">0.5</text><line x1="73.9" y1="337.7" x2="79.4" y2="337.7" stroke="#3b404c"/><text x="71.4" y="341.5" text-anchor="end" font-size="10.5" fill="#9ca0a8">0.0</text><line x1="79.40" y1="337.7" x2="79.40" y2="342.7" stroke="#3b404c"/><line x1="112.36" y1="337.7" x2="112.36" y2="342.7" stroke="#3b404c"/><line x1="145.32" y1="337.7" x2="145.32" y2="342.7" stroke="#3b404c"/><line x1="178.28" y1="337.7" x2="178.28" y2="342.7" stroke="#3b404c"/><line x1="211.24" y1="337.7" x2="211.24" y2="342.7" stroke="#3b404c"/><line x1="244.20" y1="337.7" x2="244.20" y2="342.7" stroke="#3b404c"/><line x1="277.16" y1="337.7" x2="277.16" y2="342.7" stroke="#3b404c"/><line x1="310.12" y1="337.7" x2="310.12" y2="342.7" stroke="#3b404c"/><line x1="343.08" y1="337.7" x2="343.08" y2="342.7" stroke="#3b404c"/><line x1="376.04" y1="337.7" x2="376.04" y2="342.7" stroke="#3b404c"/><line x1="409.00" y1="337.7" x2="409.00" y2="342.7" stroke="#3b404c"/><line x1="441.96" y1="337.7" x2="441.96" y2="342.7" stroke="#3b404c"/><line x1="474.92" y1="337.7" x2="474.92" y2="342.7" stroke="#3b404c"/><line x1="507.88" y1="337.7" x2="507.88" y2="342.7" stroke="#3b404c"/><line x1="540.84" y1="337.7" x2="540.84" y2="342.7" stroke="#3b404c"/><line x1="573.80" y1="337.7" x2="573.80" y2="342.7" stroke="#3b404c"/><line x1="606.76" y1="337.7" x2="606.76" y2="342.7" stroke="#3b404c"/><line x1="639.72" y1="337.7" x2="639.72" y2="342.7" stroke="#3b404c"/><line x1="672.68" y1="337.7" x2="672.68" y2="342.7" stroke="#3b404c"/><line x1="705.64" y1="337.7" x2="705.64" y2="342.7" stroke="#3b404c"/><line x1="738.60" y1="337.7" x2="738.60" y2="342.7" stroke="#3b404c"/><line x1="771.56" y1="337.7" x2="771.56" y2="342.7" stroke="#3b404c"/><line x1="804.52" y1="337.7" x2="804.52" y2="342.7" stroke="#3b404c"/><line x1="837.48" y1="337.7" x2="837.48" y2="342.7" stroke="#3b404c"/><line x1="870.44" y1="337.7" x2="870.44" y2="342.7" stroke="#3b404c"/><line x1="903.40" y1="337.7" x2="903.40" y2="342.7" stroke="#3b404c"/><line x1="936.36" y1="337.7" x2="936.36" y2="342.7" stroke="#3b404c"/><line x1="969.32" y1="337.7" x2="969.32" y2="342.7" stroke="#3b404c"/><line x1="1002.28" y1="337.7" x2="1002.28" y2="342.7" stroke="#3b404c"/><line x1="1035.24" y1="337.7" x2="1035.24" y2="342.7" stroke="#3b404c"/><line x1="1068.20" y1="337.7" x2="1068.20" y2="342.7" stroke="#3b404c"/><line x1="1101.16" y1="337.7" x2="1101.16" y2="342.7" stroke="#3b404c"/><text x="95.88" y="354.2" text-anchor="middle" font-size="11.1" fill="#4b5060">9 Dec</text><text x="161.80" y="354.2" text-anchor="middle" font-size="11.1" fill="#4b5060">11 Dec</text><text x="227.72" y="354.2" text-anchor="middle" font-size="11.1" fill="#4b5060">13 Dec</text><text x="293.64" y="354.2" text-anchor="middle" font-size="11.1" fill="#4b5060">15 Dec</text><text x="359.56" y="354.2" text-anchor="middle" font-size="11.1" fill="#4b5060">17 Dec</text><text x="425.48" y="354.2" text-anchor="middle" font-size="11.1" fill="#4b5060">19 Dec</text><text x="491.40" y="354.2" text-anchor="middle" font-size="11.1" fill="#4b5060">21 Dec</text><text x="557.32" y="354.2" text-anchor="middle" font-size="11.1" fill="#4b5060">23 Dec</text><text x="623.24" y="354.2" text-anchor="middle" font-size="11.1" fill="#4b5060">25 Dec</text><text x="689.16" y="354.2" text-anchor="middle" font-size="11.1" fill="#4b5060">27 Dec</text><text x="755.08" y="354.2" text-anchor="middle" font-size="11.1" fill="#4b5060">29 Dec</text><text x="821.00" y="354.2" text-anchor="middle" font-size="11.1" fill="#4b5060">31 Dec</text><text x="886.92" y="354.2" text-anchor="middle" font-size="11.1" fill="#4b5060">2 Jan</text><text x="919.88" y="354.2" text-anchor="middle" font-size="11.1" fill="#4b5060">3 Jan</text><text x="952.84" y="354.2" text-anchor="middle" font-size="11.1" fill="#4b5060">4 Jan</text><text x="985.80" y="354.2" text-anchor="middle" font-size="11.1" fill="#4b5060">5 Jan</text><text x="1018.76" y="354.2" text-anchor="middle" font-size="11.1" fill="#4b5060">6 Jan</text><text x="1051.72" y="354.2" text-anchor="middle" font-size="11.1" fill="#4b5060">7 Jan</text><text x="1084.68" y="354.2" text-anchor="middle" font-size="11.1" fill="#4b5060">8 Jan</text></svg>
</div>

<!-- CARDS_PLACEHOLDER -->

</body></html>
